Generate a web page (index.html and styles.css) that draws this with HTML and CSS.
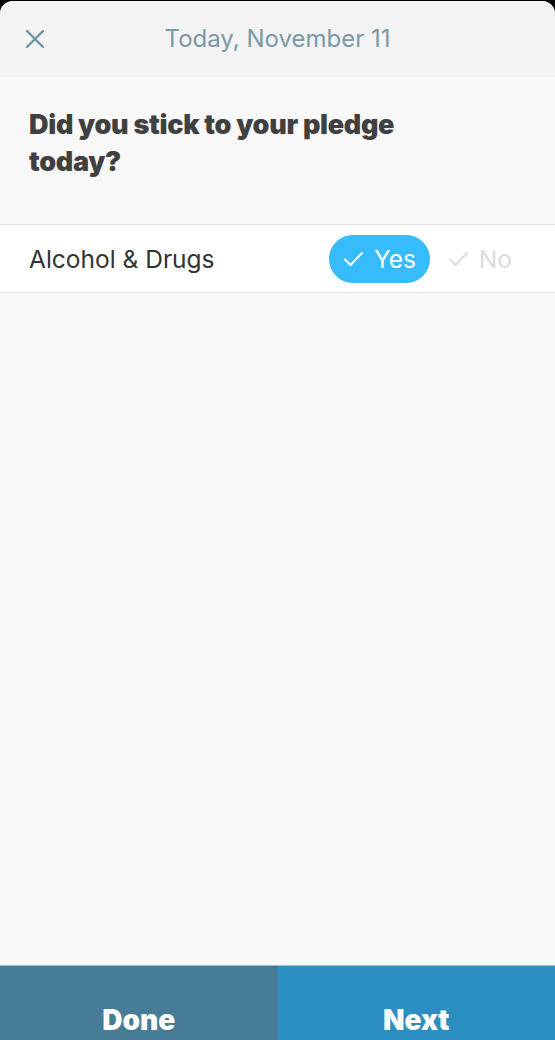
FILE: index.html
```html
<!doctype html>
<html>
<head>
<meta charset="UTF-8">
<title>Pledge</title>
<link rel="stylesheet" href="styles.css">
</head>
<body>
	<div class="sheet">
		<div class="header">
			<a class="close" href="#">
				<svg width="20" height="20" viewBox="0 0 20 20"><path d="M2 2 L18 18 M18 2 L2 18" stroke="#6f93a3" stroke-width="2.4" stroke-linecap="round" fill="none"/></svg>
			</a>
			<div class="header-title">Today, November 11</div>
		</div>
		<div class="question">
			<div class="question-text">Did you stick to your pledge today?</div>
		</div>
		<div class="pledge-row">
			<div class="pledge-name">Alcohol &amp; Drugs</div>
			<div class="choices">
				<a class="choice selected" href="#">
					<svg width="21" height="16" viewBox="0 0 21 16"><path d="M2 8.5 L7.5 14 L19 2" stroke="#fff" stroke-width="2" fill="none" stroke-linecap="round" stroke-linejoin="round"/></svg>
					Yes
				</a>
				<a class="choice" href="#">
					<svg width="21" height="16" viewBox="0 0 21 16"><path d="M2 8.5 L7.5 14 L19 2" stroke="#dcdcdc" stroke-width="2" fill="none" stroke-linecap="round" stroke-linejoin="round"/></svg>
					No
				</a>
			</div>
		</div>
		<div class="content"></div>
		<div class="footer">
			<a class="footer-btn done" href="#">Done</a>
			<a class="footer-btn next" href="#">Next</a>
		</div>
	</div>
</body>
</html>
```

FILE: styles.css
```css
html, body {
	margin: 0;
	padding: 0;
	height: 100%;
	background-color: #000;
	overflow: hidden;
	font-family: Inter, "Noto Sans", sans-serif;
}

.sheet {
	display: flex;
	flex-direction: column;
	height: 1070px;
	margin-top: 1px;
	background-color: #f8f8f8;
	border-radius: 13px 13px 0 0;
	overflow: hidden;
}

.header {
	display: flex;
	align-items: center;
	justify-content: center;
	position: relative;
	height: 76px;
	background-color: #f3f3f3;
}

.close {
	position: absolute;
	left: 25px;
	top: 28px;
	display: block;
	width: 20px;
	height: 20px;
}

.header-title {
	font-size: 24px;
	color: #7a98a6;
	padding-bottom: 2px;
}

.question {
	height: 148px;
	padding: 29px 30px 0 29px;
	box-sizing: border-box;
	border-bottom: 1px solid #e2e2e2;
}

.question-text {
	width: 400px;
	font-size: 27px;
	font-weight: 900;
	line-height: 37px;
	color: #404040;
	letter-spacing: -0.3px;
}

.pledge-row {
	display: flex;
	align-items: center;
	justify-content: space-between;
	height: 67px;
	padding: 0 43px 0 29px;
	background-color: #fff;
	border-bottom: 1px solid #e2e2e2;
}

.pledge-name {
	font-size: 24.5px;
	color: #333;
}

.choices {
	display: flex;
	align-items: center;
	gap: 10px;
}

.choice {
	display: flex;
	align-items: center;
	gap: 10px;
	height: 48px;
	padding: 0 14px;
	border-radius: 24px;
	font-size: 24.5px;
	color: #dcdcdc;
	text-decoration: none;
}

.choice.selected {
	background-color: #36bcfc;
	color: #fff;
}

.choice:not(.selected) {
	padding: 0 0 0 8px;
}

.content {
	flex: 1;
}

.footer {
	display: flex;
	height: 105px;
	border-top: 1px solid #9fc0d0;
}

.footer-btn {
	flex: 1;
	padding-top: 37px;
	text-align: center;
	font-size: 28px;
	font-weight: 900;
	color: #fff;
	text-decoration: none;
}

.done {
	background-color: #467c96;
}

.next {
	background-color: #2a8fc0;
}
```
